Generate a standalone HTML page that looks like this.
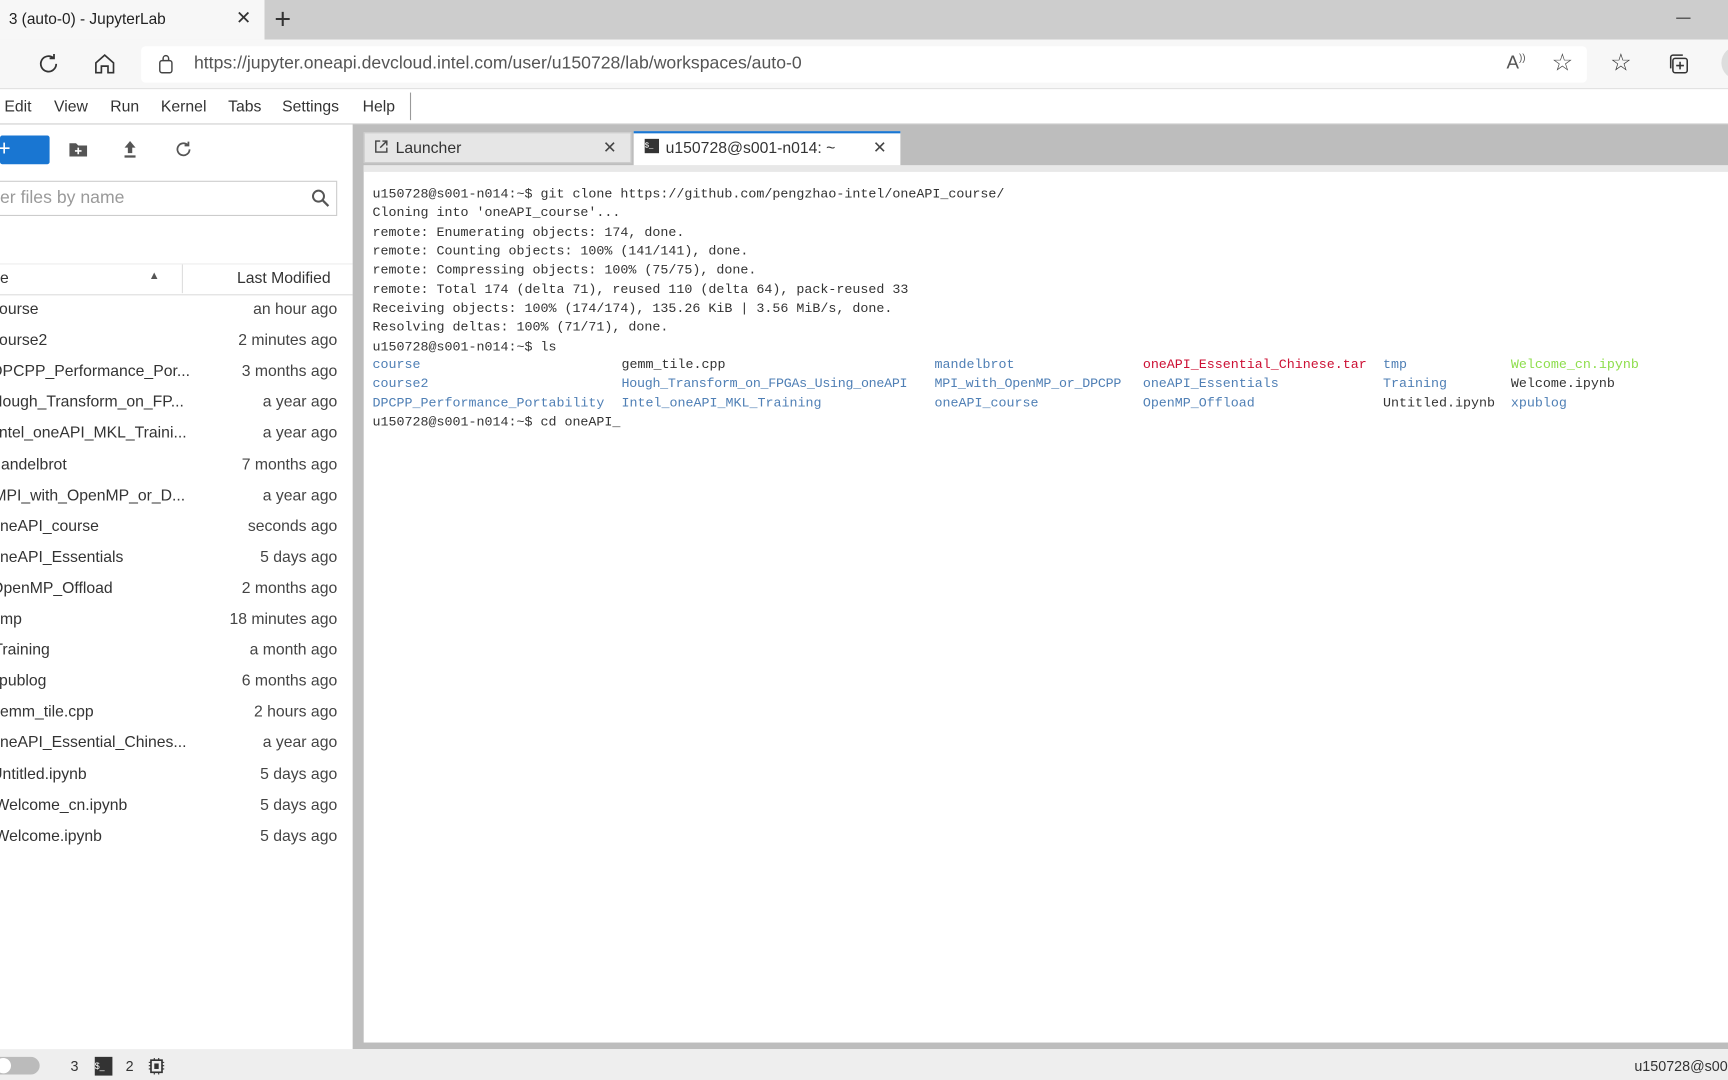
<!DOCTYPE html>
<html><head><meta charset="utf-8"><style>
html,body{margin:0;padding:0;width:1728px;height:1080px;overflow:hidden;background:#fff}
#w{position:absolute;left:0;top:0;width:1568px;height:980px;transform:scale(1.10204);transform-origin:0 0;font-family:"Liberation Sans",sans-serif;overflow:hidden}
.a{position:absolute}
.mono{font-family:"Liberation Mono",monospace;font-size:12.1px;white-space:pre;color:#333}
.fn{position:absolute;left:-8px;font-size:14.3px;color:#333;white-space:nowrap}
.fm{position:absolute;right:0;font-size:14.3px;color:#444;white-space:nowrap}
.ls{position:absolute;font-family:"Liberation Mono",monospace;font-size:12.1px;white-space:pre;color:#333}
.b{color:#4f7fb5}.r{color:#cc1034}.g{color:#8ede4c}
</style></head><body><div id="w">
<div class="a" style="left:0;top:0;width:1568px;height:36px;background:#cdcdcd"></div>
<div class="a" style="left:0;top:0;width:240px;height:36px;background:#f7f7f7"></div>
<div class="a" style="left:8px;top:9px;font-size:14px;color:#222">3 (auto-0) - JupyterLab</div>
<div class="a" style="left:214px;top:7px;font-size:17px;color:#333">✕</div>
<div class="a" style="left:249px;top:2px;font-size:26px;color:#333;font-weight:300">+</div>
<div class="a" style="left:1521px;top:16px;width:13px;height:1px;background:#333"></div>
<div class="a" style="left:0;top:36px;width:1568px;height:44px;background:#f7f7f7;border-bottom:1px solid #ddd"></div>
<svg class="a" style="left:32px;top:46px" width="24" height="24" viewBox="0 0 24 24"><path d="M19 12a7 7 0 1 1-2.5-5.4M17 3v4h-4" fill="none" stroke="#333" stroke-width="1.6"/></svg>
<svg class="a" style="left:83px;top:46px" width="24" height="24" viewBox="0 0 24 24"><path d="M4 11L12 4l8 7v9h-5v-6h-6v6H4z" fill="none" stroke="#333" stroke-width="1.5"/></svg>
<div class="a" style="left:128px;top:42px;width:1312px;height:33px;background:#fff;border-radius:4px"></div>
<svg class="a" style="left:143px;top:49px" width="16" height="18" viewBox="0 0 16 18"><rect x="2" y="6" width="11" height="11" rx="2" fill="none" stroke="#444" stroke-width="1.3"/><path d="M5 6V4a2.5 2.5 0 0 1 5 0v2" fill="none" stroke="#444" stroke-width="1.3"/></svg>
<div class="a" style="left:176px;top:49px;font-size:16px;color:#555">https://jupyter.oneapi.devcloud.intel.com/user/u150728/lab/workspaces/auto-0</div>
<div class="a" style="left:1367px;top:47px;font-size:17px;color:#555">A<sup style="font-size:9px">))</sup></div>
<div class="a" style="left:1408px;top:44px;font-size:22px;color:#444">☆</div>
<div class="a" style="left:1461px;top:44px;font-size:22px;color:#333">☆</div>
<svg class="a" style="left:1512px;top:47px" width="22" height="22" viewBox="0 0 22 22"><rect x="6" y="6" width="13" height="13" rx="2" fill="none" stroke="#333" stroke-width="1.4"/><path d="M4 15V5a2 2 0 0 1 2-2h9M12.5 9v7M9 12.5h7" fill="none" stroke="#333" stroke-width="1.4"/></svg>
<div class="a" style="left:1562px;top:42px;width:30px;height:30px;border-radius:15px;background:#ddd"></div>
<div class="a" style="left:0;top:81px;width:1568px;height:31px;background:#fff;border-bottom:1px solid #ccc"></div>
<div class="a" style="left:4px;top:89px;font-size:14.3px;color:#333">Edit</div>
<div class="a" style="left:49px;top:89px;font-size:14.3px;color:#333">View</div>
<div class="a" style="left:100px;top:89px;font-size:14.3px;color:#333">Run</div>
<div class="a" style="left:146px;top:89px;font-size:14.3px;color:#333">Kernel</div>
<div class="a" style="left:207px;top:89px;font-size:14.3px;color:#333">Tabs</div>
<div class="a" style="left:256px;top:89px;font-size:14.3px;color:#333">Settings</div>
<div class="a" style="left:329px;top:89px;font-size:14.3px;color:#333">Help</div>
<div class="a" style="left:372px;top:84px;width:1px;height:25px;background:#999"></div>
<div class="a" style="left:0;top:113px;width:320px;height:839px;background:#fff"></div>
<div class="a" style="left:0;top:123px;width:45px;height:26px;background:#1976d2;border-radius:2px;color:#fff;font-size:20px;line-height:24px;text-indent:-2px">+</div>
<svg class="a" style="left:62px;top:127px" width="18" height="16" viewBox="0 0 18 16"><path d="M1 3h6l2 2h8v10H1z" fill="#555"/><path d="M9 7v6M6 10h6" stroke="#fff" stroke-width="1.5"/></svg>
<svg class="a" style="left:110px;top:126px" width="16" height="18" viewBox="0 0 16 18"><path d="M8 2L3 8h3v5h4V8h3z M3 15h10v2H3z" fill="#555"/></svg>
<svg class="a" style="left:158px;top:127px" width="17" height="17" viewBox="0 0 17 17"><path d="M14 8.5a5.5 5.5 0 1 1-1.8-4.1M13 1.5v3.5H9.5" fill="none" stroke="#555" stroke-width="1.6"/></svg>
<div class="a" style="left:-2px;top:164px;width:308px;height:32px;border:1px solid #ccc;box-sizing:border-box"></div>
<div class="a" style="left:0;top:171px;font-size:16px;color:#9a9a9a">er files by name</div>
<svg class="a" style="left:282px;top:171px" width="18" height="18" viewBox="0 0 18 18"><circle cx="7" cy="7" r="5" fill="none" stroke="#555" stroke-width="1.8"/><path d="M11 11l5 5" stroke="#555" stroke-width="2"/></svg>
<div class="a" style="left:0;top:239px;width:320px;height:27px;border-bottom:1px solid #ddd;border-top:1px solid #eee"></div>
<div class="a" style="left:165px;top:240px;width:1px;height:26px;background:#ddd"></div>
<div class="a" style="left:0;top:245px;font-size:14.3px;color:#333">e</div>
<div class="a" style="left:135px;top:245px;font-size:10px;color:#555">▲</div>
<div class="a" style="left:215px;top:245px;font-size:14.3px;color:#333">Last Modified</div>
<div class="a" style="left:0;top:273px;width:306px;height:500px">
<div class="fn" style="top:0">course</div><div class="fm" style="top:0">an hour ago</div>
<div class="fn" style="top:28.1px">course2</div><div class="fm" style="top:28.1px">2 minutes ago</div>
<div class="fn" style="top:56.2px">DPCPP_Performance_Por...</div><div class="fm" style="top:56.2px">3 months ago</div>
<div class="fn" style="top:84.3px">Hough_Transform_on_FP...</div><div class="fm" style="top:84.3px">a year ago</div>
<div class="fn" style="top:112.4px;left:-5px">Intel_oneAPI_MKL_Traini...</div><div class="fm" style="top:112.4px">a year ago</div>
<div class="fn" style="top:140.5px;left:-11px">mandelbrot</div><div class="fm" style="top:140.5px">7 months ago</div>
<div class="fn" style="top:168.6px;left:-6px">MPI_with_OpenMP_or_D...</div><div class="fm" style="top:168.6px">a year ago</div>
<div class="fn" style="top:196.7px">oneAPI_course</div><div class="fm" style="top:196.7px">seconds ago</div>
<div class="fn" style="top:224.8px">oneAPI_Essentials</div><div class="fm" style="top:224.8px">5 days ago</div>
<div class="fn" style="top:252.9px">OpenMP_Offload</div><div class="fm" style="top:252.9px">2 months ago</div>
<div class="fn" style="top:281px;left:-4px">tmp</div><div class="fm" style="top:281px">18 minutes ago</div>
<div class="fn" style="top:309.1px;left:-6px">Training</div><div class="fm" style="top:309.1px">a month ago</div>
<div class="fn" style="top:337.2px;left:-8px">xpublog</div><div class="fm" style="top:337.2px">6 months ago</div>
<div class="fn" style="top:365.3px">gemm_tile.cpp</div><div class="fm" style="top:365.3px">2 hours ago</div>
<div class="fn" style="top:393.4px">oneAPI_Essential_Chines...</div><div class="fm" style="top:393.4px">a year ago</div>
<div class="fn" style="top:421.5px">Untitled.ipynb</div><div class="fm" style="top:421.5px">5 days ago</div>
<div class="fn" style="top:449.6px;left:-5px">Welcome_cn.ipynb</div><div class="fm" style="top:449.6px">5 days ago</div>
<div class="fn" style="top:477.7px;left:-5px">Welcome.ipynb</div><div class="fm" style="top:477.7px">5 days ago</div>
</div>
<div class="a" style="left:320px;top:113px;width:1248px;height:839px;background:#bdbdbd"></div>
<div class="a" style="left:330px;top:120px;width:243px;height:28px;background:#e6e6e6;border:1px solid #ccc;box-sizing:border-box"></div>
<svg class="a" style="left:339px;top:126px" width="14" height="14" viewBox="0 0 14 14"><path d="M6 2H2v10h10V8M8 2h4v4M12 2L6 8" fill="none" stroke="#444" stroke-width="1.3"/></svg>
<div class="a" style="left:359px;top:127px;font-size:14.3px;color:#333">Launcher</div>
<div class="a" style="left:547px;top:125px;font-size:15px;color:#444">✕</div>
<div class="a" style="left:575px;top:119px;width:242px;height:31px;background:#fff;border-top:2px solid #1976d2;box-sizing:border-box"></div>
<div class="a" style="left:585px;top:126px;width:13px;height:13px;background:#333;color:#fff;font-size:7px;line-height:13px">$_</div>
<div class="a" style="left:604px;top:127px;font-size:14.3px;color:#333">u150728@s001-n014: ~</div>
<div class="a" style="left:792px;top:125px;font-size:15px;color:#444">✕</div>
<div class="a" style="left:330px;top:150px;width:1238px;height:796px;background:#fff;border-top:6px solid #e8e8e8;box-sizing:border-box"></div>
<div class="a mono" style="left:338px;top:168px;line-height:17.35px">u150728@s001-n014:~$ git clone https://github.com/pengzhao-intel/oneAPI_course/
Cloning into 'oneAPI_course'...
remote: Enumerating objects: 174, done.
remote: Counting objects: 100% (141/141), done.
remote: Compressing objects: 100% (75/75), done.
remote: Total 174 (delta 71), reused 110 (delta 64), pack-reused 33
Receiving objects: 100% (174/174), 135.26 KiB | 3.56 MiB/s, done.
Resolving deltas: 100% (71/71), done.
u150728@s001-n014:~$ ls</div>
<div class="ls b" style="left:338px;top:324px">course</div>
<div class="ls" style="left:564px;top:324px">gemm_tile.cpp</div>
<div class="ls b" style="left:848px;top:324px">mandelbrot</div>
<div class="ls r" style="left:1037px;top:324px">oneAPI_Essential_Chinese.tar</div>
<div class="ls b" style="left:1255px;top:324px">tmp</div>
<div class="ls g" style="left:1371px;top:324px">Welcome_cn.ipynb</div>
<div class="ls b" style="left:338px;top:341px">course2</div>
<div class="ls b" style="left:564px;top:341px;letter-spacing:-0.25px">Hough_Transform_on_FPGAs_Using_oneAPI</div>
<div class="ls b" style="left:848px;top:341px;letter-spacing:-0.2px">MPI_with_OpenMP_or_DPCPP</div>
<div class="ls b" style="left:1037px;top:341px">oneAPI_Essentials</div>
<div class="ls b" style="left:1255px;top:341px">Training</div>
<div class="ls" style="left:1371px;top:341px">Welcome.ipynb</div>
<div class="ls b" style="left:338px;top:359px">DPCPP_Performance_Portability</div>
<div class="ls b" style="left:564px;top:359px">Intel_oneAPI_MKL_Training</div>
<div class="ls b" style="left:848px;top:359px">oneAPI_course</div>
<div class="ls b" style="left:1037px;top:359px">OpenMP_Offload</div>
<div class="ls" style="left:1255px;top:359px">Untitled.ipynb</div>
<div class="ls b" style="left:1371px;top:359px">xpublog</div>
<div class="ls" style="left:338px;top:376px">u150728@s001-n014:~$ cd oneAPI_</div>
<div class="a" style="left:0;top:952px;width:1568px;height:28px;background:#eeeeee"></div>
<div class="a" style="left:-8px;top:959px;width:44px;height:16px;border-radius:8px;background:#bbb"></div>
<div class="a" style="left:-4px;top:960px;width:14px;height:14px;border-radius:7px;background:#fff"></div>
<div class="a" style="left:64px;top:960px;font-size:13px;color:#333">3</div>
<div class="a" style="left:86px;top:959px;width:16px;height:17px;background:#333;color:#fff;font-size:8px;line-height:17px">$_</div>
<div class="a" style="left:114px;top:960px;font-size:13px;color:#333">2</div>
<svg class="a" style="left:134px;top:959px" width="16" height="17" viewBox="0 0 16 17"><rect x="3" y="3" width="10" height="11" fill="none" stroke="#333" stroke-width="1.5"/><rect x="6" y="6" width="4" height="5" fill="#333"/><path d="M1 5h2M1 8h2M1 11h2M13 5h2M13 8h2M13 11h2M6 1v2M10 1v2M6 14v2M10 14v2" stroke="#333"/></svg>
<div class="a" style="left:1483px;top:960px;font-size:13px;color:#333;white-space:nowrap">u150728@s001-n014</div>
</div></body></html>
